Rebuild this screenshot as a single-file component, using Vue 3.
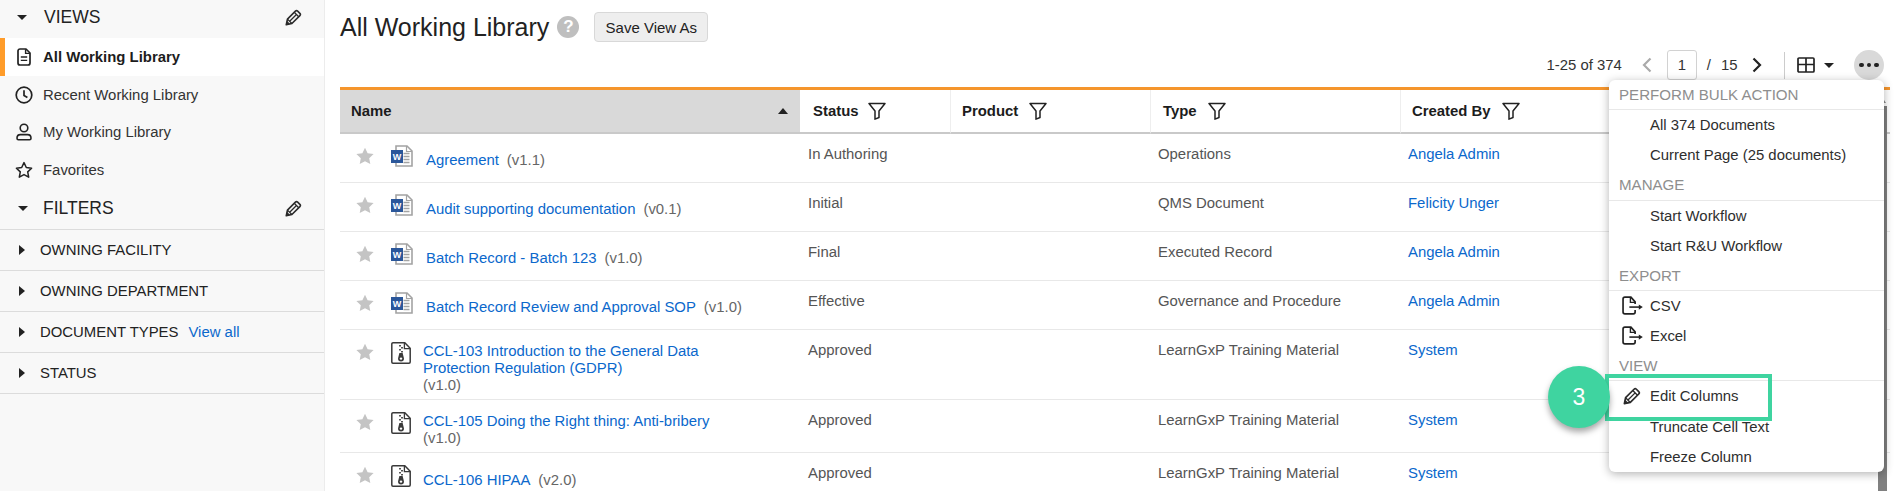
<script setup>
const views = [
  { label: 'All Working Library', icon: 'i-doc', active: true },
  { label: 'Recent Working Library', icon: 'i-clock' },
  { label: 'My Working Library', icon: 'i-user' },
  { label: 'Favorites', icon: 'i-star-o' }
]
const filters = [
  { label: 'OWNING FACILITY' },
  { label: 'OWNING DEPARTMENT' },
  { label: 'DOCUMENT TYPES', link: 'View all' },
  { label: 'STATUS' }
]
const heads = ['Status', 'Product', 'Type', 'Created By']
const rows = [
  { name: 'Agreement', v: '(v1.1)', kind: 'word', status: 'In Authoring', type: 'Operations', by: 'Angela Admin', h: 'h49' },
  { name: 'Audit supporting documentation', v: '(v0.1)', kind: 'word', status: 'Initial', type: 'QMS Document', by: 'Felicity Unger', h: 'h49' },
  { name: 'Batch Record - Batch 123', v: '(v1.0)', kind: 'word', status: 'Final', type: 'Executed Record', by: 'Angela Admin', h: 'h49' },
  { name: 'Batch Record Review and Approval SOP', v: '(v1.0)', kind: 'word', status: 'Effective', type: 'Governance and Procedure', by: 'Angela Admin', h: 'h49' },
  { name: 'CCL-103 Introduction to the General Data Protection Regulation (GDPR)', v: '(v1.0)', kind: 'zip', wrap: true, status: 'Approved', type: 'LearnGxP Training Material', by: 'System', h: 'h70' },
  { name: 'CCL-105 Doing the Right thing: Anti-bribery', v: '(v1.0)', kind: 'zip', wrap: true, status: 'Approved', type: 'LearnGxP Training Material', by: 'System', h: 'h53' },
  { name: 'CCL-106 HIPAA', v: '(v2.0)', kind: 'zip', low: true, status: 'Approved', type: 'LearnGxP Training Material', by: 'System', h: 'h60' }
]
const menu = [
  { head: 'PERFORM BULK ACTION' },
  { label: 'All 374 Documents' },
  { label: 'Current Page (25 documents)' },
  { head: 'MANAGE' },
  { label: 'Start Workflow' },
  { label: 'Start R&U Workflow' },
  { head: 'EXPORT' },
  { label: 'CSV', icon: 'i-export' },
  { label: 'Excel', icon: 'i-export' },
  { head: 'VIEW' },
  { label: 'Edit Columns', icon: 'i-pencil' },
  { label: 'Truncate Cell Text' },
  { label: 'Freeze Column' }
]
</script>

<template>
  <div class="page">
    <svg class="sprite" aria-hidden="true">
      <symbol id="i-pencil" viewBox="0 0 16 16">
        <path d="M1.2 14.8L2.3 9.5 9.8 2a1.5 1.5 0 0 1 2.1 0L14 4.1a1.5 1.5 0 0 1 0 2.1L6.5 13.7z" fill="none" stroke="#2b2b2b" stroke-width="1.5" stroke-linejoin="round"/>
        <path d="M4.4 11.6L11 5M8.7 3.1l4.2 4.2M2.3 9.5l4.2 4.2" fill="none" stroke="#2b2b2b" stroke-width="1.2"/>
        <path d="M.9 15.1l.9-4 3.1 3.1z" fill="#2b2b2b"/>
      </symbol>
      <symbol id="i-doc" viewBox="0 0 14 18">
        <path d="M1 3a2 2 0 0 1 2-2h6l4 4v10a2 2 0 0 1-2 2H3a2 2 0 0 1-2-2z" fill="none" stroke="#222" stroke-width="1.7" stroke-linejoin="round"/>
        <path d="M8.6 1.2V5.4H13" fill="none" stroke="#222" stroke-width="1.4"/>
        <path d="M3.8 9h6.4M3.8 12.4h6.4" stroke="#222" stroke-width="1.4"/>
      </symbol>
      <symbol id="i-clock" viewBox="0 0 18 18">
        <circle cx="9" cy="9" r="7.8" fill="none" stroke="#222" stroke-width="1.7"/>
        <path d="M9 4.2V9.4l3.4 2" fill="none" stroke="#222" stroke-width="1.7"/>
      </symbol>
      <symbol id="i-user" viewBox="0 0 16 18">
        <circle cx="8" cy="5" r="3.8" fill="none" stroke="#222" stroke-width="1.6"/>
        <path d="M1 15.2c0-2.4 1.6-3.6 3.4-3.6h7.2c1.8 0 3.4 1.2 3.4 3.6 0 1-.6 1.6-1.4 1.6H2.4C1.6 16.8 1 16.2 1 15.2z" fill="none" stroke="#222" stroke-width="1.6"/>
      </symbol>
      <symbol id="i-star-o" viewBox="0 0 18 18">
        <path d="M9 1.6l2.3 4.9 5.3.7-3.9 3.7 1 5.3L9 13.6l-4.7 2.6 1-5.3-3.9-3.7 5.3-.7z" fill="none" stroke="#222" stroke-width="1.5" stroke-linejoin="round"/>
      </symbol>
      <symbol id="i-star" viewBox="0 0 18 18">
        <path d="M9 .8l2.6 5.5 6 .8-4.4 4.1 1.1 5.9L9 14.2l-5.3 2.9 1.1-5.9L.4 7.1l6-.8z" fill="#c4c4c4"/>
      </symbol>
      <symbol id="i-filter" viewBox="0 0 18 18">
        <path d="M1 1.5h16L11 9v6.5l-4 1.6V9z" fill="none" stroke="#222" stroke-width="1.5" stroke-linejoin="round"/>
      </symbol>
      <symbol id="i-zip" viewBox="0 0 20 22">
        <path d="M.8 2A1.2 1.2 0 0 1 2 .8h11.8l5.4 5.4V20a1.2 1.2 0 0 1-1.2 1.2H2A1.2 1.2 0 0 1 .8 20z" fill="#fff" stroke="#3a3a3a" stroke-width="1.5"/>
        <path d="M13.4 1V6.6H19" fill="none" stroke="#3a3a3a" stroke-width="1.3"/>
        <path d="M8 3h2v1.5H8zM10 5h2v1.5h-2zM8 7h2v1.5H8zM10 9h2v1.5h-2z" fill="#555"/>
        <path d="M8.4 11h3.2l1.4 5.4a3 3 0 1 1-6 0z" fill="#3a3a3a"/>
        <circle cx="10" cy="16.6" r="1.2" fill="#fff"/>
      </symbol>
      <symbol id="i-export" viewBox="0 0 20 18">
        <path d="M12.5 7.6V5.5L8.5 1H2.8A1.8 1.8 0 0 0 1 2.8v12.4A1.8 1.8 0 0 0 2.8 17h8a1.8 1.8 0 0 0 1.7-1.8V13.4" fill="none" stroke="#222" stroke-width="1.6"/>
        <path d="M8 1.2V6h4.4" fill="none" stroke="#222" stroke-width="1.3"/>
        <path d="M7 10.5h10" stroke="#222" stroke-width="1.5"/>
        <path d="M16 8l3.8 2.5L16 13z" fill="#222"/>
      </symbol>
    </svg>

    <aside class="side">
      <div class="side-head views">
        <span class="caret-down"></span>
        <span class="side-title">VIEWS</span>
        <svg class="pencil"><use href="#i-pencil" /></svg>
      </div>
      <div v-for="v in views" :key="v.label" class="nav" :class="{ active: v.active }">
        <svg class="nav-ic"><use :href="'#' + v.icon" /></svg>
        <span>{{ v.label }}</span>
      </div>
      <div class="side-head filt">
        <span class="caret-down"></span>
        <span class="side-title">FILTERS</span>
        <svg class="pencil"><use href="#i-pencil" /></svg>
      </div>
      <div v-for="f in filters" :key="f.label" class="filter">
        <span class="caret-right"></span>
        <span>{{ f.label }}</span>
        <a v-if="f.link" class="link view-all">{{ f.link }}</a>
      </div>
    </aside>

    <main class="main">
      <div class="title-row">
        <h1 class="title">All Working Library</h1>
        <span class="help">?</span>
        <button class="save">Save View As</button>
      </div>
      <div class="pager">
        <span class="range">1-25 of 374</span>
        <svg class="chev prev" viewBox="0 0 10 16"><path d="M8.5 1.5L2 8l6.5 6.5" /></svg>
        <span class="page-box">1</span>
        <span class="slash">/</span>
        <span class="total">15</span>
        <svg class="chev next" viewBox="0 0 10 16"><path d="M1.5 1.5L8 8l-6.5 6.5" /></svg>
        <span class="divider"></span>
        <svg class="grid-ic" viewBox="0 0 18 16">
          <rect x="1" y="1" width="16" height="14" rx="1" />
          <path d="M1 7.5h16M9 1v14" />
        </svg>
        <span class="caret-down grid-caret"></span>
        <span class="more"><i></i><i></i><i></i></span>
      </div>

      <table class="tbl">
        <colgroup>
          <col class="c-name" /><col class="c-status" /><col class="c-product" /><col class="c-type" /><col />
        </colgroup>
        <thead>
          <tr>
            <th class="th-name">
              <div class="th-in"><span>Name</span><span class="sort"></span></div>
            </th>
            <th v-for="(h, i) in heads" :key="h" :class="{ first: i === 0, typ: h === 'Type' }">
              <div class="th-in start">
                <span>{{ h }}</span>
                <svg class="filter-ic"><use href="#i-filter" /></svg>
              </div>
            </th>
          </tr>
        </thead>
        <tbody>
          <tr v-for="r in rows" :key="r.name" :class="r.h">
            <td>
              <div class="name-cell">
                <svg class="star"><use href="#i-star" /></svg>
                <svg v-if="r.kind === 'word'" class="file" viewBox="0 0 22 22">
                  <path d="M5 1h11l5 5v15H5z" fill="#fff" stroke="#a3a3a3" stroke-width="1.6"/>
                  <path d="M15.5 1v5.5H21" fill="none" stroke="#a3a3a3" stroke-width="1.2"/>
                  <path d="M12.5 8.5h6M12.5 11.5h6M12.5 14.5h6M12.5 17.5h6" stroke="#a3a3a3" stroke-width="1.3"/>
                  <rect x="0" y="5" width="12" height="13" fill="#2b579a"/>
                  <text x="6" y="15" class="w-letter" text-anchor="middle">W</text>
                </svg>
                <svg v-else class="file zip"><use href="#i-zip" /></svg>
                <div class="name-text" :class="{ wrapd: r.wrap, lowz: r.low, wordz: r.kind === 'word' }">
                  <a class="link">{{ r.name }}</a><span class="ver" :class="{ block: r.wrap }">{{ r.v }}</span>
                </div>
              </div>
            </td>
            <td class="cell st">{{ r.status }}</td>
            <td class="cell"></td>
            <td class="cell">{{ r.type }}</td>
            <td class="cell"><a class="link">{{ r.by }}</a></td>
          </tr>
        </tbody>
      </table>
    </main>

    <div class="scroll-up"></div>
    <div class="scroll-bar"></div>

    <div class="menu">
      <template v-for="m in menu" :key="m.head || m.label">
        <div v-if="m.head" class="m-head">{{ m.head }}</div>
        <div v-else class="m-item">
          <svg v-if="m.icon" class="m-ic" :class="{ pen: m.icon === 'i-pencil' }"><use :href="'#' + m.icon" /></svg>
          <span>{{ m.label }}</span>
        </div>
      </template>
    </div>

    <div class="hl"></div>
    <div class="badge">3</div>
  </div>
</template>

<style scoped>
.page {
  position: relative;
  display: flex;
  width: 1902px;
  height: 491px;
  overflow: hidden;
  background: #fff;
  color: #222;
  font-family: "Liberation Sans", Arial, sans-serif;
  font-size: 14.9px;
}
.sprite { display: none; }
.link { color: #0b68cc; text-decoration: none; }

/* sidebar */
.side {
  flex: 0 0 325px;
  box-sizing: border-box;
  height: 491px;
  background: #f8f8f8;
  border-right: 1px solid #ececec;
}
.side-head {
  position: relative;
  display: flex;
  align-items: center;
  box-sizing: border-box;
  font-size: 17.5px;
  color: #222;
}
.side-head.views { height: 38px; padding: 0 0 3px 17px; }
.side-head.filt { height: 41px; padding: 0 0 0 18px; border-bottom: 1px solid #dcdcdc; }
.side-title { margin-left: 17px; }
.filt .side-title { margin-left: 15px; }
.caret-down {
  width: 0;
  height: 0;
  border-left: 5.5px solid transparent;
  border-right: 5.5px solid transparent;
  border-top: 5.5px solid #222;
}
.pencil {
  position: absolute;
  left: 285px;
  top: 9px;
  width: 17px;
  height: 17px;
}
.filt .pencil { top: 11px; }
.nav {
  display: flex;
  align-items: center;
  height: 37.5px;
  padding-left: 15px;
  color: #333;
}
.nav.active {
  height: 38px;
  padding-left: 10px;
  border-left: 5px solid #ff9c2a;
  background: #fff;
  font-weight: 700;
  color: #1c1c1c;
}
.nav-ic {
  flex: 0 0 18px;
  width: 18px;
  height: 18px;
  margin-right: 10px;
}
.filter {
  display: flex;
  align-items: center;
  box-sizing: border-box;
  height: 41px;
  padding: 0 0 0 19px;
  border-bottom: 1px solid #dcdcdc;
  font-size: 14.9px;
  color: #222;
}
.caret-right {
  width: 0;
  height: 0;
  margin-right: 15px;
  border-top: 5px solid transparent;
  border-bottom: 5px solid transparent;
  border-left: 6px solid #222;
}
.view-all { margin-left: 10px; }

/* main */
.main {
  flex: 1;
  min-width: 0;
  padding: 0 12px 0 15px;
}
.title-row {
  display: flex;
  align-items: center;
  box-sizing: border-box;
  height: 50px;
  padding-top: 4px;
}
.title {
  margin: 0;
  font-size: 25px;
  font-weight: 400;
  color: #222;
}
.help {
  display: flex;
  align-items: center;
  justify-content: center;
  width: 22px;
  height: 22px;
  margin-left: 8px;
  border-radius: 50%;
  background: #bfbfbf;
  color: #fff;
  font-size: 17px;
  font-weight: 700;
}
.save {
  box-sizing: border-box;
  width: 114px;
  height: 30px;
  margin-left: 15px;
  padding: 0;
  border: 1px solid #d8d8d8;
  border-radius: 4px;
  background: #eee;
  color: #222;
  font-family: inherit;
  font-size: 15px;
}
.pager {
  display: flex;
  align-items: center;
  justify-content: flex-end;
  height: 30px;
  margin-bottom: 7px;
  padding-right: 6px;
  color: #333;
}
.chev {
  width: 10px;
  height: 16px;
  fill: none;
  stroke-width: 2.2;
}
.chev.prev { margin-left: 20px; stroke: #aaa; }
.chev.next { margin-left: 14.5px; stroke: #222; }
.page-box {
  box-sizing: border-box;
  display: flex;
  align-items: center;
  justify-content: center;
  width: 30px;
  height: 30px;
  margin-left: 15px;
  border: 1px solid #d2d2d2;
  border-radius: 3px;
}
.slash { margin-left: 10px; }
.total { margin-left: 10px; }
.divider {
  width: 1px;
  height: 27px;
  margin-left: 22px;
  background: #ccc;
}
.grid-ic {
  width: 18px;
  height: 16px;
  margin-left: 12px;
  fill: none;
  stroke: #222;
  stroke-width: 1.7;
}
.grid-caret { margin-left: 9px; }
.more {
  display: flex;
  align-items: center;
  justify-content: center;
  gap: 3px;
  width: 30px;
  height: 30px;
  margin-left: 20px;
  border-radius: 50%;
  background: #d9d9d9;
}
.more i {
  width: 4.5px;
  height: 4.5px;
  border-radius: 50%;
  background: #222;
}

/* table */
.tbl {
  width: 1550px;
  table-layout: fixed;
  border-collapse: separate;
  border-spacing: 0;
  border-top: 3px solid #f5952c;
}
.c-name { width: 460px; }
.c-status { width: 150px; }
.c-product { width: 200px; }
.c-type { width: 250px; }
th {
  height: 42px;
  padding: 0 0 0 11px;
  border-bottom: 2px solid #c9c9c9;
  border-left: 1px solid #eee;
  text-align: left;
  font-weight: 700;
  color: #1c1c1c;
}
th.first { padding-left: 13px; border-left: 0; }
th.first .filter-ic { margin-left: 9px; }
th.typ { padding-left: 12px; }
.th-name {
  padding-left: 11px;
  border-left: 0;
  background: #d9d9d9;
}
.th-in {
  display: flex;
  align-items: center;
  justify-content: space-between;
  padding-right: 12px;
}
.th-in.start { justify-content: flex-start; padding-right: 0; }
.sort {
  width: 0;
  height: 0;
  border-left: 5px solid transparent;
  border-right: 5px solid transparent;
  border-bottom: 6px solid #222;
}
.filter-ic {
  width: 18px;
  height: 18px;
  margin-left: 11px;
}
td {
  padding: 0;
  border-bottom: 1px solid #e8e8e8;
  vertical-align: top;
}
.h49 { height: 49px; }
.h70 { height: 70px; }
.h53 { height: 53px; }
.h60 { height: 60px; }
.cell {
  padding: 11.5px 8px 0;
  line-height: 17px;
  color: #555;
}
.name-cell { display: flex; align-items: flex-start; }
.star {
  flex: 0 0 18px;
  width: 18px;
  height: 18px;
  margin: 13px 17px 0 16px;
}
.file {
  flex: 0 0 22px;
  width: 22px;
  height: 22px;
  margin-top: 11px;
}
.file.zip { flex-basis: 20px; width: 20px; margin-top: 12px; }
.w-letter {
  font-family: "Liberation Sans", Arial, sans-serif;
  font-size: 9px;
  font-weight: 700;
  fill: #fff;
}
.name-text {
  width: 310px;
  margin-left: 12px;
  padding-top: 12.5px;
  line-height: 17px;
}
.name-text.wordz { width: 360px; margin-left: 13px; padding-top: 17.5px; }
.name-text.lowz { padding-top: 18.5px; }
.ver { margin-left: 8px; color: #666; }
.ver.block { display: block; margin-left: 0; }

/* scrollbar behind the menu */
.scroll-bar {
  position: absolute;
  left: 1878px;
  top: 106px;
  bottom: 0;
  width: 9px;
  background: #808080;
}
.scroll-up {
  position: absolute;
  left: 1878px;
  top: 97px;
  width: 0;
  height: 0;
  border-left: 4.5px solid transparent;
  border-right: 4.5px solid transparent;
  border-bottom: 6px solid #8a8a8a;
}

/* menu */
.menu {
  position: absolute;
  left: 1609px;
  top: 80px;
  width: 275px;
  border-radius: 6px;
  background: #fff;
  box-shadow: 0 2px 10px rgba(0, 0, 0, 0.3);
}
.m-head {
  box-sizing: border-box;
  height: 30.15px;
  padding: 6px 0 0 10px;
  border-bottom: 1px solid #e8e8e8;
  font-size: 15.1px;
  color: #8e8e8e;
}
.m-item {
  position: relative;
  display: flex;
  align-items: center;
  height: 30.15px;
  padding-left: 41px;
  color: #2e2e2e;
}
.m-ic {
  position: absolute;
  left: 13px;
  top: 5px;
  width: 21px;
  height: 19px;
}
.m-ic.pen { left: 14px; top: 6px; width: 18px; height: 18px; }

/* annotation */
.hl {
  position: absolute;
  left: 1605px;
  top: 374px;
  box-sizing: border-box;
  width: 167px;
  height: 47px;
  border: 4.5px solid #3fd4a0;
}
.badge {
  position: absolute;
  left: 1548px;
  top: 366px;
  display: flex;
  align-items: center;
  justify-content: center;
  width: 62px;
  height: 62px;
  border-radius: 50%;
  background: #3fd4a0;
  box-shadow: 0 4px 6px rgba(0, 0, 0, 0.35);
  color: #fff;
  font-size: 23px;
}
</style>

<style>
html, body { margin: 0; padding: 0; background: #fff; }
</style>
